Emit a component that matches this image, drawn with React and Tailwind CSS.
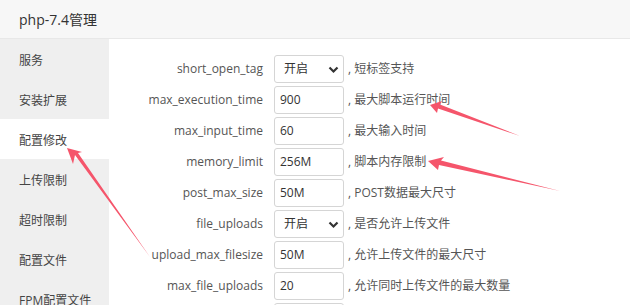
import React from "react";

const rows = [
  { label: "short_open_tag", type: "select", value: "开启", desc: "短标签支持" },
  { label: "max_execution_time", value: "900", desc: "最大脚本运行时间" },
  { label: "max_input_time", value: "60", desc: "最大输入时间" },
  { label: "memory_limit", value: "256M", desc: "脚本内存限制" },
  { label: "post_max_size", value: "50M", desc: "POST数据最大尺寸" },
  { label: "file_uploads", type: "select", value: "开启", desc: "是否允许上传文件" },
  { label: "upload_max_filesize", value: "50M", desc: "允许上传文件的最大尺寸" },
  { label: "max_file_uploads", value: "20", desc: "允许同时上传文件的最大数量" },
  { label: "", value: "", desc: "" },
];

const menu = ["服务", "安装扩展", "配置修改", "上传限制", "超时限制", "配置文件", "FPM配置文件"];

function Chevron() {
  return (
    <svg width="11" height="8" viewBox="0 0 11 8" className="absolute right-[4px] top-[10px]">
      <path d="M1.5 1.5 L5.5 5.5 L9.5 1.5" fill="none" stroke="#333" strokeWidth="2.2" />
    </svg>
  );
}

export default function App() {
  return (
    <div
      className="relative w-[630px] h-[305px] overflow-hidden bg-white text-[#555]"
      style={{ fontFamily: '"Open Sans", "Noto Sans CJK SC", sans-serif' }}
    >
      <div className="h-[39px] bg-[#f7f7f7] border-b border-[#e8e8e8] flex items-center pl-[19px] pt-[1px] text-[14px] text-[#333]">
        php-7.4管理
      </div>
      <div className="flex">
        <div className="w-[109px] shrink-0 bg-[#efefef] h-[300px]">
          {menu.map((m, i) => (
            <div
              key={m}
              className={`h-[40px] flex items-center pl-[19px] pt-[3px] text-[12px] text-[#444] leading-none ${i === 2 ? "bg-white" : ""}`}
            >
              {m}
            </div>
          ))}
        </div>
        <div className="flex-1 pt-[16px]">
          {rows.map((r, i) => (
            <div key={i} className="flex items-center h-[28px] mb-[3px]">
              <div className="w-[154px] text-right text-[12px] text-[#555] whitespace-nowrap">{r.label}</div>
              <div className="ml-[11px] relative w-[70px] h-[28px] border border-[#d5d5d5] rounded-[3px] bg-white flex items-center text-[12px] text-[#333]">
                {r.type === "select" ? (
                  <>
                    <span className="pl-[9px]">{r.value}</span>
                    <Chevron />
                  </>
                ) : (
                  <span className="pl-[5px]">{r.value}</span>
                )}
              </div>
              <div className="ml-[4px] text-[12px] text-[#555] whitespace-nowrap">
                {r.desc ? `, ${r.desc}` : ""}
              </div>
            </div>
          ))}
        </div>
      </div>
      <svg className="absolute inset-0 pointer-events-none" width="630" height="305" viewBox="0 0 630 305">
        <g fill="#f5556b">
          <polygon points="430,105 442,101 440,104.5 520,136 438,108.5 437,113" />
          <polygon points="428,161 444,157 441,160.5 560,191 439,165 438,170" />
          <polygon points="67,148 82,152 78,153 150,257 75,155 73,164" />
        </g>
      </svg>
    </div>
  );
}
